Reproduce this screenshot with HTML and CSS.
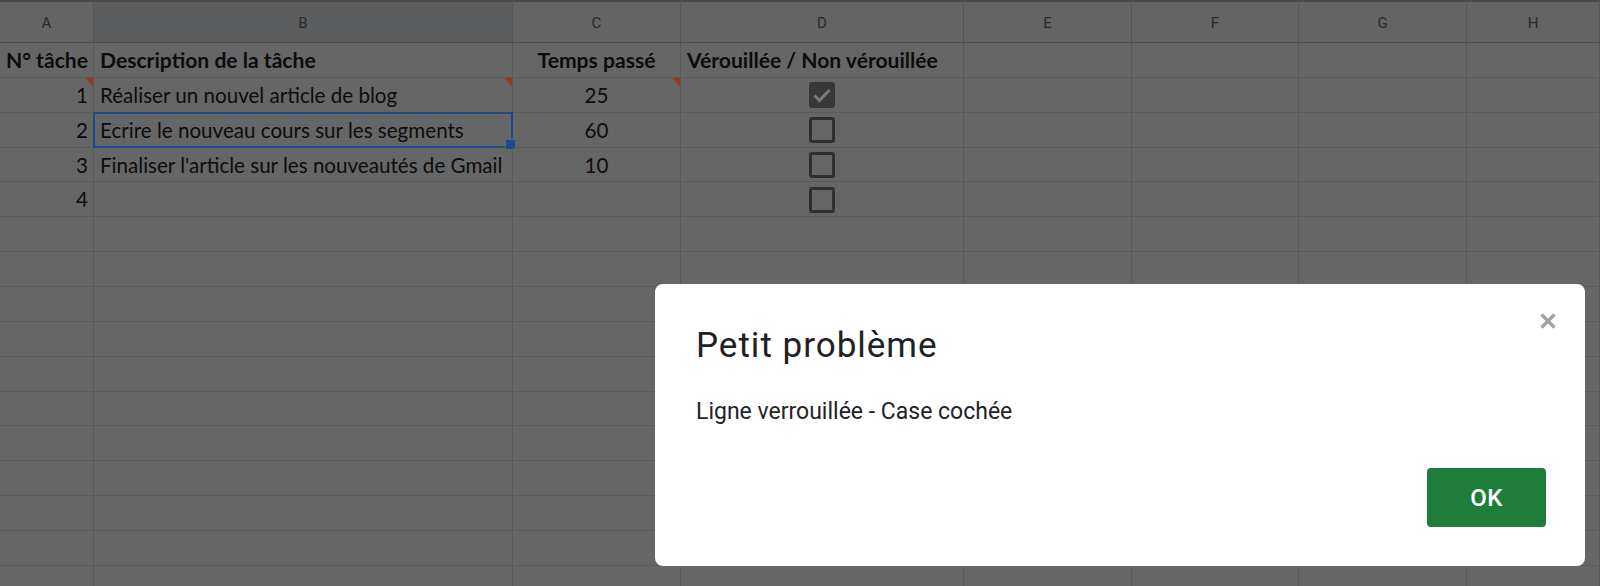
FILE: index.html
```html
<!DOCTYPE html>
<html lang="fr">
<head>
<meta charset="utf-8">
<title>Feuille – Petit problème</title>
<link rel="stylesheet" href="styles.css">
</head>
<body>
<div class="sheet">
  <div class="ch">A</div><div class="ch ch-sel">B</div><div class="ch">C</div><div class="ch">D</div><div class="ch">E</div><div class="ch">F</div><div class="ch">G</div><div class="ch">H</div>

  <div class="c bold right">N° tâche</div><div class="c bold">Description de la tâche</div><div class="c bold center">Temps passé</div><div class="c bold">Vérouillée / Non vérouillée</div><div class="c"></div><div class="c"></div><div class="c"></div><div class="c"></div>

  <div class="c right note">1</div><div class="c note">Réaliser un nouvel article de blog</div><div class="c center note">25</div><div class="c center"><span class="cb checked"><svg viewBox="0 0 20 20" width="20" height="20"><path d="M2.5 10.5l5 5 10-10.5" fill="none" stroke="#7d7d7d" stroke-width="2.8"/></svg></span></div><div class="c"></div><div class="c"></div><div class="c"></div><div class="c"></div>

  <div class="c right">2</div><div class="c sel">Ecrire le nouveau cours sur les segments</div><div class="c center">60</div><div class="c center"><span class="cb"></span></div><div class="c"></div><div class="c"></div><div class="c"></div><div class="c"></div>

  <div class="c right">3</div><div class="c">Finaliser l'article sur les nouveautés de Gmail</div><div class="c center">10</div><div class="c center"><span class="cb"></span></div><div class="c"></div><div class="c"></div><div class="c"></div><div class="c"></div>

  <div class="c right">4</div><div class="c"></div><div class="c"></div><div class="c center"><span class="cb"></span></div><div class="c"></div><div class="c"></div><div class="c"></div><div class="c"></div>

  <div class="c"></div><div class="c"></div><div class="c"></div><div class="c"></div><div class="c"></div><div class="c"></div><div class="c"></div><div class="c"></div>
  <div class="c"></div><div class="c"></div><div class="c"></div><div class="c"></div><div class="c"></div><div class="c"></div><div class="c"></div><div class="c"></div>
  <div class="c"></div><div class="c"></div><div class="c"></div><div class="c"></div><div class="c"></div><div class="c"></div><div class="c"></div><div class="c"></div>
  <div class="c"></div><div class="c"></div><div class="c"></div><div class="c"></div><div class="c"></div><div class="c"></div><div class="c"></div><div class="c"></div>
  <div class="c"></div><div class="c"></div><div class="c"></div><div class="c"></div><div class="c"></div><div class="c"></div><div class="c"></div><div class="c"></div>
  <div class="c"></div><div class="c"></div><div class="c"></div><div class="c"></div><div class="c"></div><div class="c"></div><div class="c"></div><div class="c"></div>
  <div class="c"></div><div class="c"></div><div class="c"></div><div class="c"></div><div class="c"></div><div class="c"></div><div class="c"></div><div class="c"></div>
  <div class="c"></div><div class="c"></div><div class="c"></div><div class="c"></div><div class="c"></div><div class="c"></div><div class="c"></div><div class="c"></div>
  <div class="c"></div><div class="c"></div><div class="c"></div><div class="c"></div><div class="c"></div><div class="c"></div><div class="c"></div><div class="c"></div>
  <div class="c"></div><div class="c"></div><div class="c"></div><div class="c"></div><div class="c"></div><div class="c"></div><div class="c"></div><div class="c"></div>
  <div class="c"></div><div class="c"></div><div class="c"></div><div class="c"></div><div class="c"></div><div class="c"></div><div class="c"></div><div class="c"></div>
  <div class="c"></div><div class="c"></div><div class="c"></div><div class="c"></div><div class="c"></div><div class="c"></div><div class="c"></div><div class="c"></div>
</div>

<div class="backdrop">
  <div class="dialog" role="dialog">
    <button class="close" aria-label="Fermer"><svg viewBox="0 0 18 18" width="18" height="18"><path d="M2.5 2.5l13 13M15.5 2.5l-13 13" stroke="#a3a3a3" stroke-width="3.4" stroke-linecap="butt"/></svg></button>
    <h1 class="title">Petit problème</h1>
    <p class="msg">Ligne verrouillée - Case cochée</p>
    <div class="actions"><button class="ok">OK</button></div>
  </div>
</div>
</body>
</html>
```

FILE: styles.css
```css
* { box-sizing: border-box; }

html, body {
  margin: 0;
  width: 1600px;
  height: 586px;
  overflow: hidden;
  background: #666666;
}

.sheet {
  display: grid;
  grid-template-columns: 94px 419px 168px 283px 168px 167px 168px 1fr;
  grid-template-rows: 43px;
  grid-auto-rows: 34.86px;
  height: 586px;
  overflow: hidden;
  font-family: "Lato", "Liberation Sans", sans-serif;
  font-size: 20.6px;
  color: #0c0c0c;
}

.ch {
  display: flex;
  align-items: center;
  justify-content: center;
  background: #646464;
  border-top: 2px solid #4a4a4a;
  border-bottom: 1px solid #4d4d4d;
  border-right: 1px solid #555555;
  font-family: "Roboto", "Liberation Sans", sans-serif;
  font-size: 15px;
  color: #2a2a2a;
  padding-top: 1px;
}
.ch-sel { background: #5c5d5e; }

.c {
  position: relative;
  display: flex;
  align-items: center;
  padding: 0 6px;
  border-right: 1px solid #5a5a5a;
  border-bottom: 1px solid #5a5a5a;
  white-space: nowrap;
  min-width: 0;
}
.c.right { justify-content: flex-end; padding-right: 5px; }
.c.center { justify-content: center; }
.c.bold { font-weight: 700; font-size: 21.1px; }

.note::after {
  content: "";
  position: absolute;
  top: 0;
  right: 0;
  border-left: 8px solid transparent;
  border-top: 8px solid #9a3a1b;
}

.sel::before {
  content: "";
  position: absolute;
  top: -1px;
  left: -1px;
  right: -1px;
  bottom: -1px;
  border: 2px solid #1c4a8a;
}
.sel::after {
  content: "";
  position: absolute;
  right: -4px;
  bottom: -3px;
  width: 9px;
  height: 9px;
  background: #1c4a8a;
  border: 1px solid #666666;
}

.cb {
  display: flex;
  align-items: center;
  justify-content: center;
  width: 26px;
  height: 26px;
  border: 3px solid #2f2f2f;
  border-radius: 3px;
  margin-top: 1px;
}
.cb.checked {
  background: #383838;
  border-color: #383838;
}

.backdrop {
  position: fixed;
  inset: 0;
}

.dialog {
  position: absolute;
  left: 655px;
  top: 284px;
  width: 930px;
  height: 282px;
  background: #ffffff;
  border-radius: 8px;
  padding: 41px 39px 39px 41px;
  display: flex;
  flex-direction: column;
  font-family: "Roboto", "Liberation Sans", sans-serif;
  color: #202124;
}

.close {
  position: absolute;
  top: 28px;
  right: 28px;
  width: 18px;
  height: 18px;
  padding: 0;
  border: 0;
  background: none;
  display: flex;
}

.title {
  margin: 0;
  font-size: 35px;
  font-weight: 400;
  line-height: 42px;
  letter-spacing: 1px;
}

.msg {
  margin: 30px 0 0;
  font-size: 23px;
  line-height: 30px;
  color: #222326;
}

.actions {
  margin-top: auto;
  display: flex;
  justify-content: flex-end;
}

.ok {
  width: 119px;
  height: 59px;
  border: 0;
  border-radius: 4px;
  background: #1f7d3b;
  color: #ffffff;
  font-family: "Roboto", "Liberation Sans", sans-serif;
  font-size: 24px;
  font-weight: 500;
  letter-spacing: 0.5px;
}
```
